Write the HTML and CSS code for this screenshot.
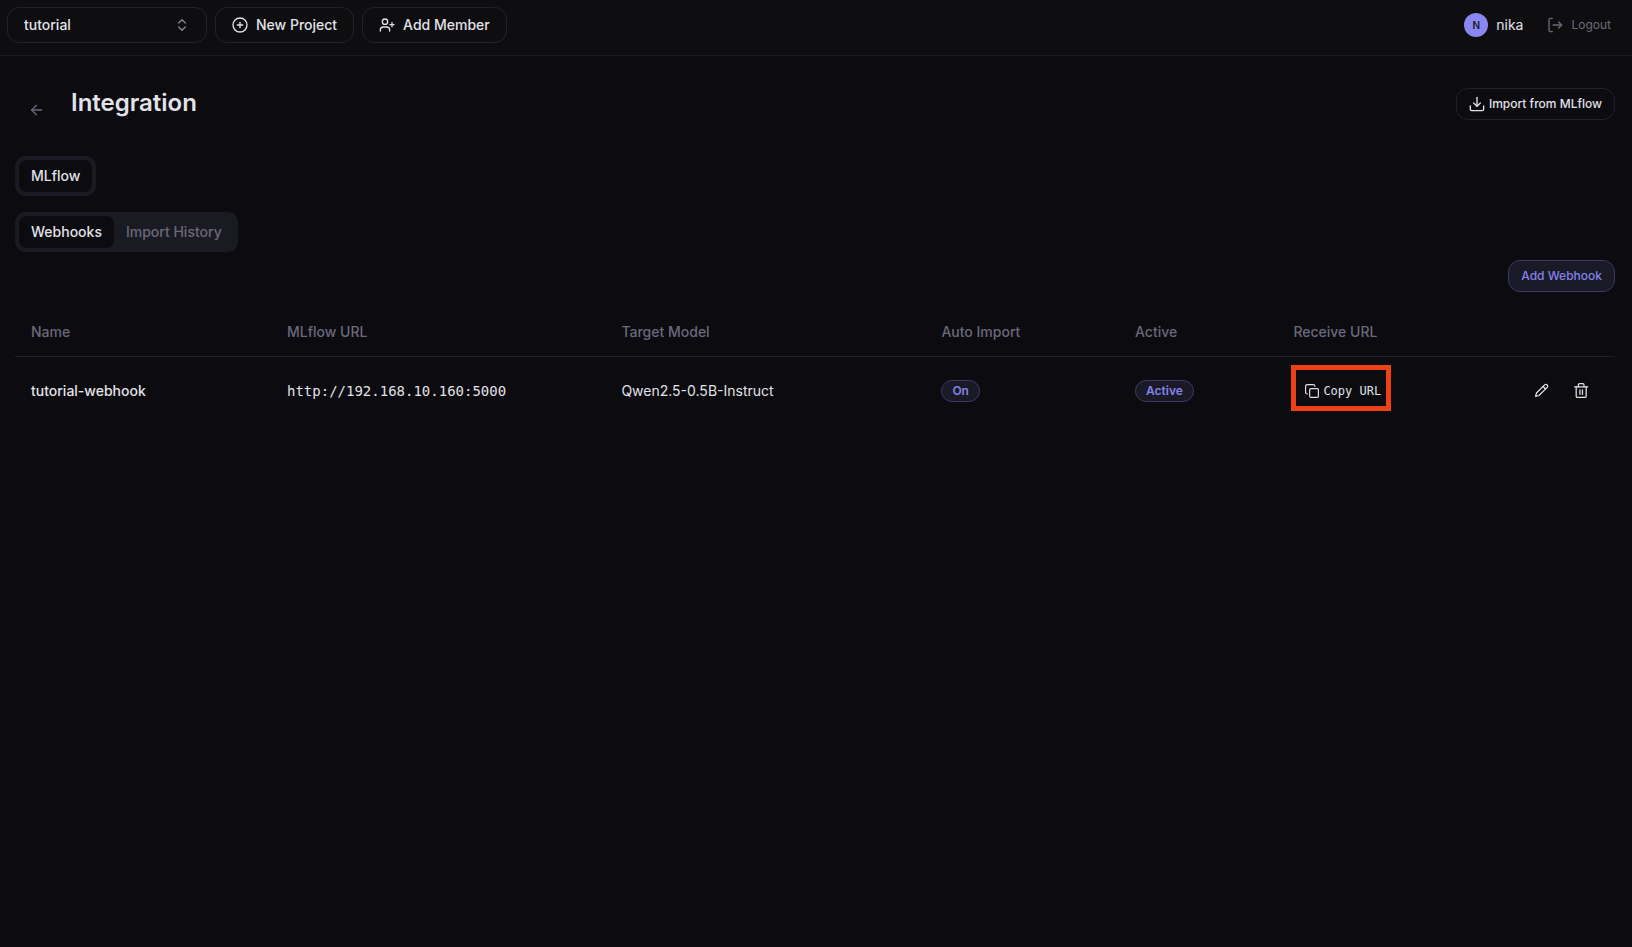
FILE: index.html
```html
<!DOCTYPE html>
<html lang="en">
<head>
    <meta charset="UTF-8">
    <meta name="viewport" content="width=device-width, initial-scale=1.0">
    <title>Integration</title>
    <link rel="stylesheet" href="styles.css">
</head>
<body>
    <header class="topbar">
        <div class="project-select">
            <select aria-label="Project">
                <option>tutorial</option>
            </select>
            <svg class="icon" viewBox="0 0 24 24"><path d="m7 15 5 5 5-5"/><path d="m7 9 5-5 5 5"/></svg>
        </div>
        <button class="btn" type="button">
            <svg class="icon" viewBox="0 0 24 24"><circle cx="12" cy="12" r="10.500"/><path d="M8 12h8"/><path d="M12 8v8"/></svg>
            New Project
        </button>
        <button class="btn" type="button">
            <svg class="icon" viewBox="0 0 24 24"><path d="M2 21v-1.500A4.500 4.500 0 0 1 6.500 15h5a4.500 4.500 0 0 1 4.500 4.500V21"/><circle cx="9" cy="7" r="4"/><path d="M19.500 8.500v6"/><path d="M22.500 11.500h-6"/></svg>
            Add Member
        </button>
        <div class="user">
            <span class="avatar">N</span>
            <span>nika</span>
        </div>
        <button class="logout" type="button">
            <svg class="icon" viewBox="0 0 24 24"><path d="M8 22H5a2 2 0 0 1-2-2V4a2 2 0 0 1 2-2h3"/><path d="m17.500 16.500 4.500-4.500-4.500-4.500"/><path d="M21 12H9"/></svg>
            Logout
        </button>
    </header>

    <main>
        <div class="page-head">
            <a class="back" href="#" aria-label="Back">
                <svg class="icon" viewBox="0 0 24 24"><path d="m11 19-7-7 7-7"/><path d="M19 12H4"/></svg>
            </a>
            <h1>Integration</h1>
            <button class="btn btn-sm" type="button">
                <svg class="icon" viewBox="0 0 24 24"><path d="M22 15v5a2 2 0 0 1-2 2H4a2 2 0 0 1-2-2v-5"/><path d="m7 10.500 5 5 5-5"/><path d="M12 15V2"/></svg>
                Import from MLflow
            </button>
        </div>

        <div class="tabs" role="tablist">
            <button class="tab active" type="button" role="tab">MLflow</button>
        </div>
        <div class="tabs" role="tablist">
            <button class="tab active" type="button" role="tab">Webhooks</button>
            <button class="tab" type="button" role="tab">Import History</button>
        </div>

        <div class="toolbar">
            <button class="btn btn-sm btn-accent" type="button">Add Webhook</button>
        </div>

        <table>
            <thead>
                <tr>
                    <th class="col-name">Name</th>
                    <th class="col-url">MLflow URL</th>
                    <th class="col-model">Target Model</th>
                    <th class="col-import">Auto Import</th>
                    <th class="col-active">Active</th>
                    <th>Receive URL</th>
                    <th></th>
                </tr>
            </thead>
            <tbody>
                <tr>
                    <td class="name">tutorial-webhook</td>
                    <td class="mono">http://192.168.10.160:5000</td>
                    <td>Qwen2.5-0.5B-Instruct</td>
                    <td><span class="badge">On</span></td>
                    <td><span class="badge">Active</span></td>
                    <td>
                        <button class="copy highlight" type="button">
                            <svg class="icon" viewBox="0 0 24 24"><rect x="8" y="8" width="15" height="15" rx="2"/><path d="M4 17a3 3 0 0 1-3-3V4a3 3 0 0 1 3-3h10a3 3 0 0 1 3 3"/></svg>
                            Copy URL
                        </button>
                    </td>
                    <td>
                        <div class="actions">
                            <button type="button" aria-label="Edit">
                                <svg class="icon" viewBox="0 0 24 24"><path d="M17 3a2.800 2.800 0 0 1 4 4L8 20l-5.500 1.500L4 16z"/><path d="m14.500 5.500 4 4"/></svg>
                            </button>
                            <button type="button" aria-label="Delete">
                                <svg class="icon" viewBox="0 0 24 24"><path d="M1 6h21"/><path d="M19.500 6v15a2 2 0 0 1-2 2h-12a2 2 0 0 1-2-2V6"/><path d="M7 6V3a2 2 0 0 1 2-2h5a2 2 0 0 1 2 2v3"/><path d="M9.500 11v7"/><path d="M13.500 11v7"/></svg>
                            </button>
                        </div>
                    </td>
                </tr>
            </tbody>
        </table>
    </main>
</body>
</html>
```
FILE: styles.css
```css
* {
    box-sizing: border-box;
}
body {
    margin: 0;
    background-color: #0c0b10;
    color: #e2e2e9;
    font-family: Inter, sans-serif;
    font-size: 14px;
    line-height: 20px;
}
button, select {
    font: inherit;
    color: inherit;
    background: none;
    border: none;
    padding: 0;
    cursor: pointer;
}
.icon {
    width: 16px;
    height: 16px;
    flex-shrink: 0;
    fill: none;
    stroke: currentColor;
    stroke-width: 2;
    stroke-linecap: round;
    stroke-linejoin: round;
}

/* Top bar */
.topbar {
    display: flex;
    align-items: center;
    gap: 8px;
    padding: 7px 21px 12px 7px;
    background-color: #0e0e10;
    border-bottom: 1px solid #1b1b1f;
}
.project-select {
    position: relative;
    width: 200px;
}
.project-select select {
    appearance: none;
    width: 100%;
    height: 36px;
    padding: 0 16px;
    border: 1px solid #222229;
    border-radius: 12px;
    font-weight: 500;
}
.project-select .icon {
    position: absolute;
    top: 10px;
    right: 17px;
    color: #88888c;
    pointer-events: none;
}
.btn {
    display: flex;
    align-items: center;
    gap: 8px;
    height: 36px;
    padding: 0 16px;
    border: 1px solid #222229;
    border-radius: 12px;
    font-weight: 500;
}
.btn-sm {
    gap: 4px;
    height: 32px;
    padding: 0 12px;
    font-size: 12px;
}
.btn-accent {
    background-color: #191a26;
    border-color: #3b3a66;
    color: #8583e8;
}
.user {
    display: flex;
    align-items: center;
    gap: 8px;
    margin-left: auto;
}
.avatar {
    width: 24px;
    height: 24px;
    border-radius: 50%;
    background-color: #8a88f0;
    color: #1b1b2e;
    font-size: 10px;
    font-weight: 600;
    line-height: 24px;
    text-align: center;
}
.logout {
    display: flex;
    align-items: center;
    gap: 8px;
    margin-left: 16px;
    color: #6b6979;
    font-size: 12px;
}

/* Page */
main {
    padding: 32px 17px 0 15px;
}
.page-head {
    display: flex;
    align-items: flex-start;
    margin-bottom: 24px;
}
.back {
    display: flex;
    padding: 14px;
    color: #6b6979;
}
h1 {
    flex: 1;
    margin: 0 0 0 12px;
    font-size: 24px;
    font-weight: 600;
    line-height: 30px;
}
.tabs {
    display: flex;
    width: fit-content;
    padding: 4px;
    margin-bottom: 16px;
    border-radius: 10px;
    background-color: #1a1a22;
}
.tab {
    height: 32px;
    padding: 0 12px;
    border-radius: 8px;
    color: #6b6979;
    font-weight: 500;
}
.tab.active {
    background-color: #0c0b10;
    color: #e2e2e9;
}
.toolbar {
    display: flex;
    justify-content: flex-end;
    margin: -8px 0 16px;
}

/* Webhooks table */
table {
    width: 100%;
    table-layout: fixed;
    border-collapse: collapse;
}
th {
    height: 48px;
    padding: 0 16px;
    border-bottom: 1px solid #222229;
    color: #6b6979;
    font-weight: 500;
    text-align: left;
}
td {
    padding: 16px;
}
.col-name {
    width: 16%;
}
.col-url {
    width: 20.9%;
}
.col-model {
    width: 20%;
}
.col-import {
    width: 12.1%;
}
.col-active {
    width: 9.9%;
}
.name {
    font-weight: 500;
}
.mono, .copy {
    font-family: "DejaVu Sans Mono", monospace;
}
.badge {
    display: inline-block;
    padding: 2px 10px;
    border: 1px solid #3b3a66;
    border-radius: 11px;
    background-color: #191a26;
    color: #8583e8;
    font-size: 12px;
    font-weight: 600;
    line-height: 16px;
}
.copy {
    position: relative;
    display: flex;
    align-items: center;
    gap: 4px;
    height: 32px;
    padding: 0 12px;
    font-size: 12px;
    white-space: nowrap;
}
.copy .icon {
    width: 14px;
    height: 14px;
}
.highlight::after {
    content: "";
    position: absolute;
    inset: -10px 2px -4px -2px;
    border: 5px solid #ee4118;
}
.actions {
    display: flex;
    justify-content: flex-end;
    gap: 4px;
}
.actions button {
    display: flex;
    align-items: center;
    justify-content: center;
    width: 36px;
    height: 36px;
}
.actions .icon {
    width: 15px;
    height: 15px;
}
```
